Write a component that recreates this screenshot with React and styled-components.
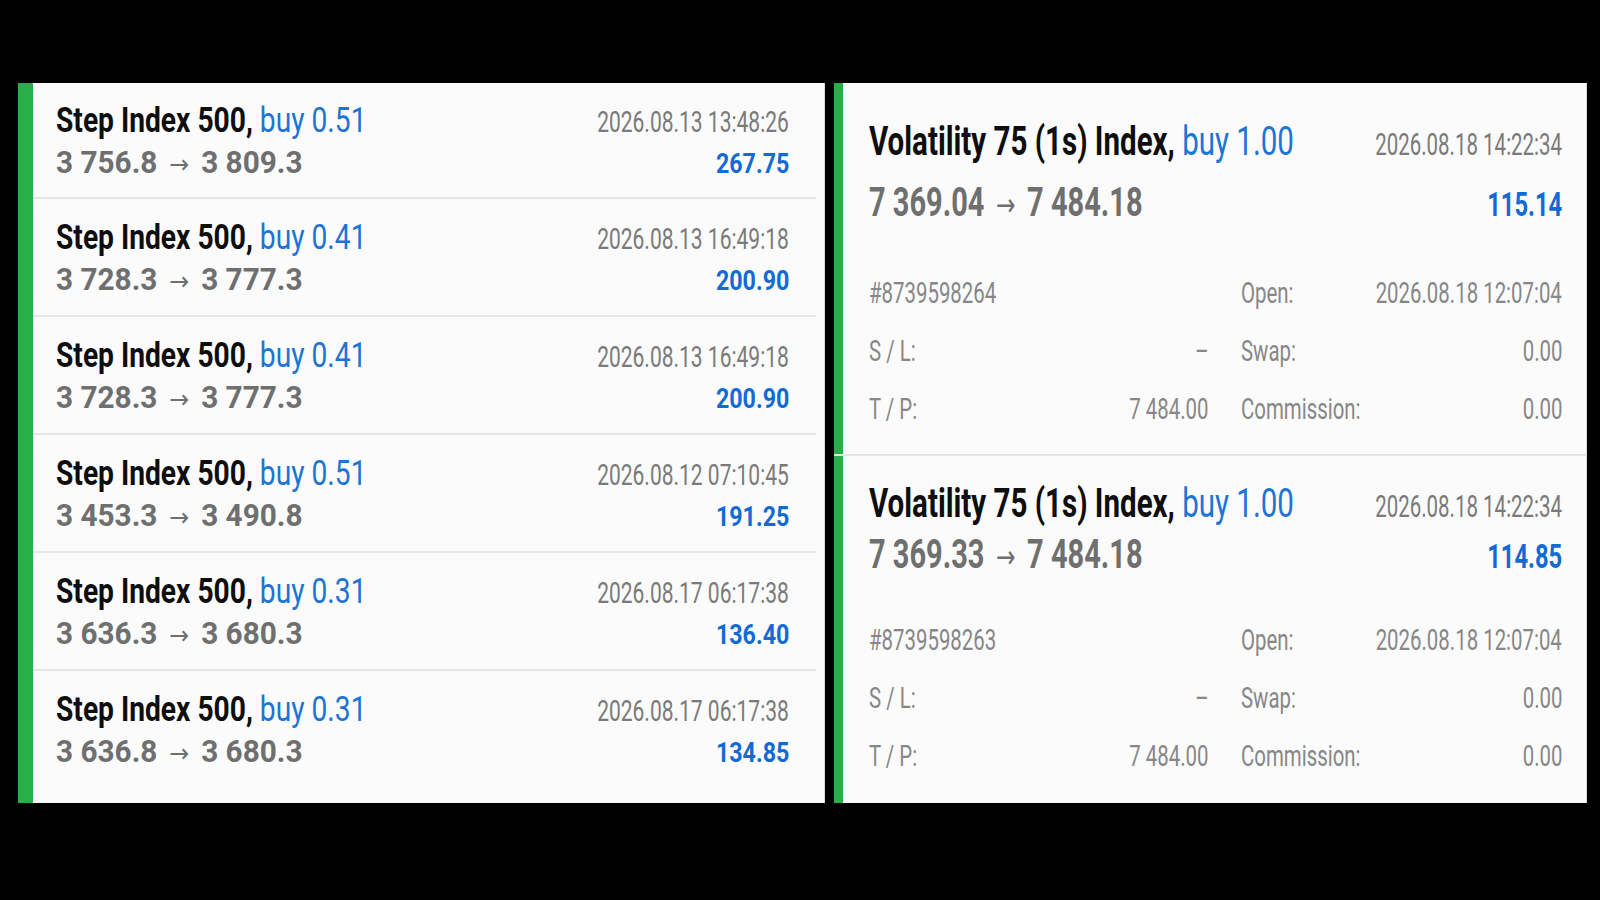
import React from 'react';
import styled, { createGlobalStyle, css } from 'styled-components';

const GREEN = '#27b04a';
const LOT_BLUE = '#1d74d4';
const PROFIT_BLUE = '#126bd5';

const GlobalStyle = createGlobalStyle`
  html, body {
    margin: 0;
    padding: 0;
    background: #000;
  }
  body {
    font-family: Roboto, "Liberation Sans", sans-serif;
  }
`;

// the screenshot text is tall and narrow, so glyphs get squeezed sideways
const squeeze = css`
  display: inline-block;
  flex-shrink: 0;
  white-space: nowrap;
  font-size: ${p => p.$m.size}px;
  line-height: ${p => p.$m.lh}px;
  transform: scaleX(${p => p.$m.k});
  transform-origin: ${p => (p.$end ? 'right' : 'left')} center;
`;

const Screen = styled.main`
  width: 1600px;
  height: 900px;
  box-sizing: border-box;
  padding: 83px 13px 0 18px;
  display: flex;
  align-items: flex-start;
  gap: 9px;
`;

const HistoryList = styled.section`
  width: 807px;
  height: 720px;
  box-sizing: border-box;
  background: #fbfbfb;
  border-left: 15px solid ${GREEN};
  box-shadow: inset -1px 0 0 #d9d9d9;
  display: flex;
  flex-direction: column;
`;

const DealRow = styled.div`
  box-sizing: border-box;
  height: 118px;
  margin-right: 9px;
  padding: 18px 27px 0 23px;
  border-top: 2px solid #e6e6e6;

  &:first-child {
    height: 114px;
    padding-top: 17px;
    border-top: 0;
  }
  &:last-child {
    flex: 1;
  }
`;

const PositionList = styled.section`
  width: 753px;
  height: 720px;
  overflow: hidden;
  background: #fbfbfb;
  box-shadow: inset -1px 0 0 #d9d9d9;
  display: flex;
  flex-direction: column;
`;

const PositionCard = styled.div`
  box-sizing: border-box;
  border-left: 9px solid ${GREEN};
  padding: ${p => p.$top}px 25px ${p => p.$bottom}px 26px;

  &:last-child {
    flex: 1;
  }
`;

const Divider = styled.div`
  height: 2px;
  flex-shrink: 0;
  background: #e4e4e4;
`;

const Line = styled.div`
  display: flex;
  align-items: baseline;
  height: ${p => p.$h}px;
  margin-top: ${p => p.$gap || 0}px;
`;

const Slot = styled.div`
  flex: 1 1 0;
  min-width: 0;
  display: flex;
  justify-content: ${p => (p.$end ? 'flex-end' : 'flex-start')};
`;

const Title = styled.span`
  ${squeeze};
  font-weight: 700;
  color: #0e0e0e;
`;

const Lot = styled.span`
  font-weight: 400;
  color: ${LOT_BLUE};
`;

const Stamp = styled.span`
  ${squeeze};
  font-weight: 400;
  color: #7a7a7a;
`;

const Price = styled.span`
  ${squeeze};
  font-weight: 700;
  color: #6f6f6f;
`;

const Arrow = styled.span`
  font-family: "DejaVu Sans", sans-serif;
  font-weight: 400;
  font-size: 0.8em;
  margin: 0 0.5em;
`;

const Profit = styled.span`
  ${squeeze};
  font-weight: 700;
  color: ${PROFIT_BLUE};
`;

const DetailRow = styled.div`
  display: flex;
  align-items: baseline;
  gap: 32px;
  height: 58px;
  margin-top: ${p => p.$gap || 0}px;
`;

const DetailHalf = styled.div`
  display: flex;
  align-items: baseline;
  flex: ${p => (p.$wide ? '0 0 340px' : '1 1 0')};
  min-width: 0;
`;

const Detail = styled.span`
  ${squeeze};
  font-weight: 400;
  color: #878787;
`;

const compact = {
  title: { size: 35, k: 0.805, lh: 42 },
  stamp: { size: 30, k: 0.7, lh: 42 },
  price: { size: 32, k: 0.93, lh: 40 },
  profit: { size: 27, k: 0.86, lh: 40 },
};

const wide = {
  title: { size: 41, k: 0.72, lh: 44 },
  stamp: { size: 32, k: 0.64, lh: 44 },
  price: { size: 40, k: 0.725, lh: 52 },
  profit: { size: 33, k: 0.72, lh: 52 },
  detail: { size: 30, k: 0.68, lh: 58 },
};

const deals = [
  { lot: '0.51', open: '3 756.8', close: '3 809.3', time: '2026.08.13 13:48:26', profit: '267.75' },
  { lot: '0.41', open: '3 728.3', close: '3 777.3', time: '2026.08.13 16:49:18', profit: '200.90' },
  { lot: '0.41', open: '3 728.3', close: '3 777.3', time: '2026.08.13 16:49:18', profit: '200.90' },
  { lot: '0.51', open: '3 453.3', close: '3 490.8', time: '2026.08.12 07:10:45', profit: '191.25' },
  { lot: '0.31', open: '3 636.3', close: '3 680.3', time: '2026.08.17 06:17:38', profit: '136.40' },
  { lot: '0.31', open: '3 636.8', close: '3 680.3', time: '2026.08.17 06:17:38', profit: '134.85' },
];

const positions = [
  { ticket: '8739598264', open: '7 369.04', profit: '115.14', top: 36, bottom: 16, priceGap: 14, detailGap: 35 },
  { ticket: '8739598263', open: '7 369.33', profit: '114.85', top: 25, bottom: 13, priceGap: 4, detailGap: 30 },
];

function Headline({ m, symbol, lot, from, to, time, profit, priceGap }) {
  return (
    <>
      <Line $h={m.title.lh}>
        <Slot>
          <Title $m={m.title}>
            {symbol},{' '}<Lot>buy {lot}</Lot>
          </Title>
        </Slot>
        <Slot $end>
          <Stamp $m={m.stamp} $end>{time}</Stamp>
        </Slot>
      </Line>
      <Line $h={m.price.lh} $gap={priceGap}>
        <Slot>
          <Price $m={m.price}>
            {from}<Arrow>→</Arrow>{to}
          </Price>
        </Slot>
        <Slot $end>
          <Profit $m={m.profit} $end>{profit}</Profit>
        </Slot>
      </Line>
    </>
  );
}

function DetailPair({ label, value, first }) {
  return (
    <DetailHalf $wide={first}>
      <Slot>
        <Detail $m={wide.detail}>{label}</Detail>
      </Slot>
      <Slot $end>
        {value && <Detail $m={wide.detail} $end>{value}</Detail>}
      </Slot>
    </DetailHalf>
  );
}

function Position({ p }) {
  return (
    <PositionCard $top={p.top} $bottom={p.bottom}>
      <Headline
        m={wide}
        symbol="Volatility 75 (1s) Index"
        lot="1.00"
        from={p.open}
        to="7 484.18"
        time="2026.08.18 14:22:34"
        profit={p.profit}
        priceGap={p.priceGap}
      />
      <DetailRow $gap={p.detailGap}>
        <DetailPair first label={`#${p.ticket}`} />
        <DetailPair label="Open:" value="2026.08.18 12:07:04" />
      </DetailRow>
      <DetailRow>
        <DetailPair first label="S / L:" value="–" />
        <DetailPair label="Swap:" value="0.00" />
      </DetailRow>
      <DetailRow>
        <DetailPair first label="T / P:" value="7 484.00" />
        <DetailPair label="Commission:" value="0.00" />
      </DetailRow>
    </PositionCard>
  );
}

export default function App() {
  return (
    <>
      <GlobalStyle />
      <Screen>
        <HistoryList>
          {deals.map((d, i) => (
            <DealRow key={i}>
              <Headline
                m={compact}
                symbol="Step Index 500"
                lot={d.lot}
                from={d.open}
                to={d.close}
                time={d.time}
                profit={d.profit}
              />
            </DealRow>
          ))}
        </HistoryList>
        <PositionList>
          <Position p={positions[0]} />
          <Divider />
          <Position p={positions[1]} />
        </PositionList>
      </Screen>
    </>
  );
}
